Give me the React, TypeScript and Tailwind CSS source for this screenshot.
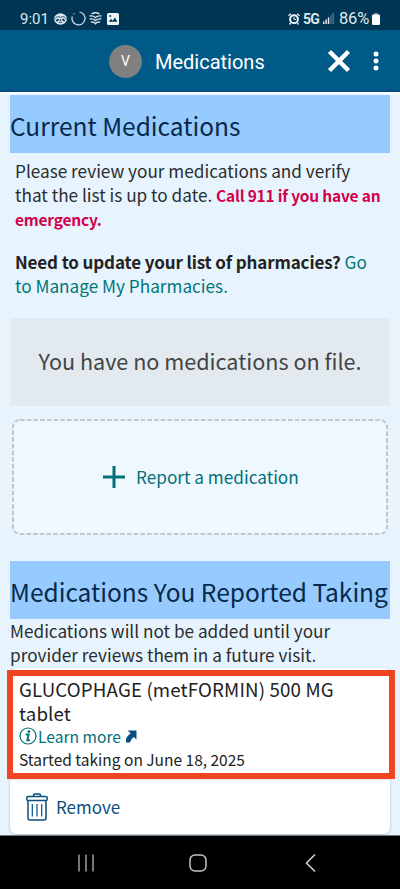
import type { ReactNode } from 'react';

function StatusBar() {
  return (
    <div className="flex h-[30px] items-center bg-[#003553] pt-[7px] pr-[20px] pl-5 font-[Roboto,sans-serif] text-[#dbe7ee]">
      <span className="w-[34px] text-[15px] leading-4">9:01</span>
      <svg width="13" height="12" viewBox="0 0 13 12">
        <ellipse cx="6.5" cy="6" rx="6.500" ry="5.700" fill="#dbe7ee" />
        <path d="M.6 6.500C1.500 3.500 4.500 3.200 6.500 4.400C8.500 3.200 11.500 3.500 12.400 6.500" stroke="#003553" strokeWidth=".8" fill="none" />
        <path d="M2.300 8l2.200-1.800M10.700 8L8.500 6.200" stroke="#003553" strokeWidth="1.700" fill="none" />
        <path d="M4.800 9q1.700 1.300 3.400 0" stroke="#003553" strokeWidth=".9" fill="none" />
        <circle cx="6.500" cy="7.200" r=".9" fill="#003553" />
      </svg>
      <svg className="ml-1" width="15" height="15" viewBox="0 0 15 15" fill="none" stroke="#dbe7ee" strokeWidth="1.200">
        <path d="M8.500 1A6.500 6.500 0 1 1 1.300 5.500" />
        <path d="M2 4A6.500 6.500 0 0 1 4 2" strokeOpacity=".4" />
      </svg>
      <svg className="ml-[3px]" width="13" height="13" viewBox="0 0 13 13" fill="none" stroke="#dbe7ee" strokeWidth="1.400">
        <path d="M2.500 2Q6.500-.5 10.500 2M.5 4Q4.500 3.500 6.500 5.500Q8.500 3.500 12.500 4M.7 7Q4.500 6.500 6.500 8.600Q8.500 6.500 12.300 7M2 10Q5 9.600 6.500 11.700Q8 9.600 11 10" />
      </svg>
      <svg className="ml-[5px]" width="12" height="12" viewBox="0 0 12 12">
        <rect width="12" height="12" rx="1.500" fill="#eef5f8" />
        <path d="M1.800 8.800l2.200-3 1.700 2 2.300-3.300 2.300 4.300z" fill="#003553" />
        <circle cx="3.200" cy="3" r="1" fill="#003553" />
      </svg>
      <svg className="ml-auto" width="12" height="12" viewBox="0 0 12 12" fill="none" stroke="#eef5f8">
        <circle cx="6" cy="6.200" r="3.900" strokeWidth="2" />
        <path d="M.5 2.800L3 .8M11.500 2.800L9 .8M2.500 10l-1 1.500M9.500 10l1 1.500" strokeWidth="1.400" />
        <path d="M6 4v2.500h2" strokeWidth="1" />
      </svg>
      <span className="ml-[3px] w-[20px] text-[14px] leading-4 font-bold tracking-[-0.9px]">5G</span>
      <svg width="11" height="11" viewBox="0 0 11 11" fill="#dbe7ee">
        <path d="M0 8.500h1.500V11H0zM2.400 6.500h1.500V11H2.400zM4.800 4.300h1.500V11H4.800z" />
        <path d="M7.200 2.200h1.500V11H7.200zM9.500 0H11v11H9.500z" opacity=".35" />
      </svg>
      <span className="ml-[5px] w-[33px] text-[16.5px] leading-4 tracking-[-0.2px]">86%</span>
      <svg width="8" height="12" viewBox="0 0 8 12">
        <path d="M2 0h4v2H2z" fill="#7890a0" />
        <rect y="1.500" width="8" height="10.500" rx="1.300" fill="#fff" />
      </svg>
    </div>
  );
}

function TopBar() {
  return (
    <header className="flex h-[62px] items-center border-b-2 border-[#054f7b] bg-[#005a87] pt-[2px] pl-[109px] text-white">
      <div className="flex h-[33px] w-[33px] items-center justify-center rounded-full bg-[#808080] font-[Roboto,sans-serif] text-[14px]">
        V
      </div>
      <h1 className="ml-[13px] w-[172px] pt-px font-[Roboto,sans-serif] text-[20px] leading-6 whitespace-nowrap">Medications</h1>
      <svg width="24" height="24" viewBox="0 0 24 24" stroke="#fff" strokeWidth="4.500">
        <path d="M2.500 2.500l19 19M21.500 2.500l-19 19" />
      </svg>
      <svg className="ml-[22px]" width="6" height="20" viewBox="0 0 6 20" fill="#fff">
        <circle cx="3" cy="3" r="2.500" />
        <circle cx="3" cy="10" r="2.500" />
        <circle cx="3" cy="17" r="2.500" />
      </svg>
    </header>
  );
}

function SectionTitle({ children }: { children: ReactNode }) {
  return (
    <h2 className="h-[58px] bg-[#97cbff] text-[24.5px] leading-[62px] whitespace-nowrap text-[#07294a]">{children}</h2>
  );
}

function InfoIcon() {
  return (
    <svg className="shrink-0" width="18" height="18" viewBox="0 0 18 18" fill="none" stroke="#00707a">
      <circle cx="9" cy="9" r="8" strokeWidth="1.200" />
      <path d="M6.800 7.500h2.900L8.300 13.300h2.600" strokeWidth="1.900" />
      <circle cx="9.900" cy="4.600" r="1.400" fill="#00707a" stroke="none" />
    </svg>
  );
}

function ArrowIcon() {
  return (
    <svg className="mt-px" width="12" height="13" viewBox="0 0 12 13" fill="#084f7f">
      <path d="M2.800.5H11.500V9.500L8.700 6.900Q5.400 9 5 12.500H1Q0 7 5.600 3.500z" />
    </svg>
  );
}

function TrashIcon() {
  return (
    <svg width="22" height="28" viewBox="0 0 22 28" fill="none" stroke="#084f7f" strokeWidth="1.500">
      <path d="M7.500 3.500V2.200Q7.500 1 8.700 1h4.600q1.200 0 1.200 1.200v1.300" />
      <rect x=".8" y="3.500" width="20.400" height="4" rx="1.300" />
      <path d="M2 7.500V25q0 2 2 2h14q2 0 2-2V7.500" />
      <path d="M6.300 11v12.500M11 11v12.500M15.700 11v12.500" strokeWidth="1.200" />
    </svg>
  );
}

function ReportedMedication() {
  return (
    <div className="relative h-[166px] rounded-md bg-white shadow-[0_1px_3px_rgba(60,110,140,0.35)]">
      <div className="h-[112px] border-b border-[#e2e8ec] pt-[9px] pl-[9px] text-[#222]">
        <p className="text-[18.7px] leading-6 tracking-[0.15px] whitespace-nowrap">
          GLUCOPHAGE (metFORMIN) 500 MG
          <br />
          tablet
        </p>
        <a className="flex h-[22px] items-center text-[15.6px] leading-[22px] text-[#00707a]">
          <InfoIcon />
          <span className="ml-px w-[87px] shrink-0 whitespace-nowrap">Learn more</span>
          <ArrowIcon />
        </a>
        <p className="text-[15.5px] leading-[24px] whitespace-nowrap">Started taking on June 18, 2025</p>
      </div>
      <a className="flex h-[54px] items-center pl-[16px] text-[17px] text-[#084f7f]">
        <TrashIcon />
        <span className="ml-2">Remove</span>
      </a>
      <div className="absolute -left-[3px] top-[2px] h-[109px] w-[388px] border-6 border-[#f04423]" />
    </div>
  );
}

function NavBar() {
  return (
    <nav className="flex h-[54px] items-center border-t border-[#777] bg-black pt-px pl-[78px]">
      <svg width="16" height="18" viewBox="0 0 16 18" stroke="#b5b5b5" strokeWidth="1.300">
        <path d="M1 .5v17M8 .5v17M15 .5v17" />
      </svg>
      <svg className="ml-[95px]" width="18" height="18" viewBox="0 0 18 18" fill="none" stroke="#c5c5c5" strokeWidth="1.500">
        <rect x="1" y="1" width="16" height="16" rx="5" />
      </svg>
      <svg className="ml-[98px]" width="11" height="18" viewBox="0 0 11 18" fill="none" stroke="#d5d5d5" strokeWidth="1.500">
        <path d="M10 .5L1.500 9l8.500 8.500" />
      </svg>
    </nav>
  );
}

export default function App() {
  return (
    <div className="flex h-[889px] w-[400px] flex-col overflow-hidden bg-[#e7f4fd] font-['Noto_Sans_CJK_SC',sans-serif]">
      <StatusBar />
      <TopBar />
      <main className="h-[743px] border-t-2 border-[#f6fcff] px-[10px] pt-px">
        <SectionTitle>Current Medications</SectionTitle>
        <div className="pt-[6px] pl-[5px] text-[17.2px] leading-6 whitespace-nowrap text-[#2a2d30]">
          <p>
            Please review your medications and verify
            <br />
            that the list is up to date.{' '}
            <b className="text-[15.5px] leading-none tracking-[-0.2px] text-[#d3004c]">Call 911 if you have an</b>
            <br />
            <b className="text-[15.5px] leading-none tracking-[-0.2px] text-[#d3004c]">emergency.</b>
          </p>
          <p className="mt-[19px]">
            <b className="text-[17px] leading-none tracking-[-0.13px] text-[#222]">Need to update your list of pharmacies?</b>{' '}
            <a className="text-[#00757a]">Go</a>
            <br />
            <a className="text-[#00757a]">to Manage My Pharmacies.</a>
          </p>
        </div>
        <div className="mt-[20px] h-[88px] bg-[#e2eaf0] text-center text-[21.6px] leading-[86px] whitespace-nowrap text-[#444]">
          You have no medications on file.
        </div>
        <button className="relative mt-[13px] ml-[2px] flex h-[116px] w-[376px] items-center rounded-lg bg-[#f0f8ff] pb-px pl-[90px] text-[17.2px] text-[#00707a]">
          <svg className="absolute inset-0" width="376" height="116" viewBox="0 0 376 116" fill="none">
            <rect x="1" y="1" width="374" height="114" rx="7" stroke="#c4c6c8" strokeWidth="2" strokeDasharray="4.700 2" />
          </svg>
          <svg width="24" height="24" viewBox="0 0 24 24" stroke="#00707a" strokeWidth="3">
            <path d="M12 1v22M1 12h22" />
          </svg>
          <span className="ml-[10px] whitespace-nowrap">Report a medication</span>
        </button>
        <div className="mt-[26px]">
          <SectionTitle>Medications You Reported Taking</SectionTitle>
        </div>
        <p className="h-[49px] text-[17.2px] leading-6 whitespace-nowrap text-[#2a2d30]">
          Medications will not be added until your
          <br />
          provider reviews them in a future visit.
        </p>
        <ReportedMedication />
      </main>
      <NavBar />
    </div>
  );
}
